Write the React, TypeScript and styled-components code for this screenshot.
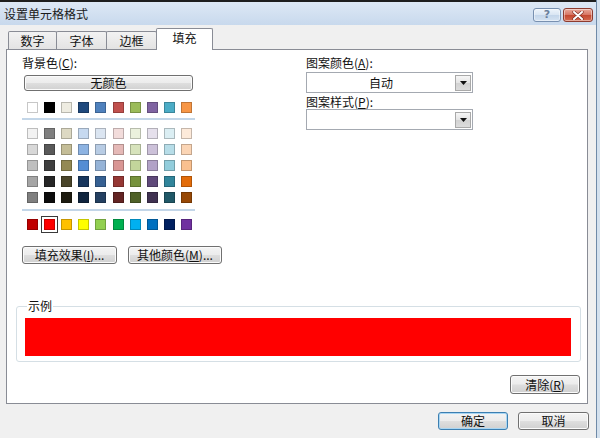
import React from "react";
import styled, { createGlobalStyle } from "styled-components";

const Global = createGlobalStyle`
  html, body { margin: 0; padding: 0; width: 600px; height: 438px; overflow: hidden; background: #d4e1ee; }
  body { font-family: "Noto Sans CJK SC", "Noto Sans", sans-serif; font-size: 12px; color: #111; }
  #root { width: 600px; height: 438px; }
  u { text-decoration-thickness: 1px; text-underline-offset: 1px; }
`;

const Window = styled.div`
  width: 597px;
  height: 438px;
  box-sizing: border-box;
  background: #f0f0f0;
  border-right: 1px solid #6f8aa8;
  display: flex;
  flex-direction: column;
`;

const TopEdge = styled.div`
  height: 2px;
  flex: none;
  background: #1e1e1e;
`;

const TitleBar = styled.div`
  height: 23px;
  flex: none;
  display: flex;
  align-items: flex-start;
  justify-content: space-between;
  padding: 0 3px 0 4px;
  background: linear-gradient(#dde8f5, #c8d9ed);
`;

const Title = styled.div`
  line-height: 14px;
  margin-top: 5px;
  font-size: 12px;
  color: #1a1a1a;
`;

const TitleButtons = styled.div`
  display: flex;
  gap: 2px;
  margin-top: 6px;
`;

const CaptionButton = styled.div<{ $close?: boolean }>`
  width: ${(p) => (p.$close ? 30 : 28)}px;
  height: 14px;
  box-sizing: border-box;
  border-radius: 3px;
  border: 1px solid ${(p) => (p.$close ? "#8d3b2f" : "#7890b0")};
  background: ${(p) =>
    p.$close
      ? "linear-gradient(#e9a99b, #d77462 50%, #c4472f 51%, #d46a4f)"
      : "linear-gradient(#eef4fb, #d9e5f3 50%, #c3d5ea 51%, #d5e3f2)"};
  box-shadow: inset 0 0 0 1px rgba(255, 255, 255, 0.45);
  display: flex;
  align-items: center;
  justify-content: center;
  font-size: 11px;
  font-weight: bold;
  line-height: 12px;
  color: #6a7f9c;
  font-family: "DejaVu Sans", sans-serif;
`;

const Body = styled.div`
  flex: 1;
  display: flex;
  flex-direction: column;
`;

const TabRow = styled.div`
  margin-top: 3px;
  height: 21px;
  flex: none;
  display: flex;
  align-items: flex-end;
  padding-left: 8px;
`;

const Tab = styled.div<{ $active?: boolean; $w: number }>`
  width: ${(p) => p.$w}px;
  height: ${(p) => (p.$active ? 22 : 18)}px;
  margin-bottom: ${(p) => (p.$active ? -1 : 0)}px;
  margin-left: -1px;
  &:first-child { margin-left: 0; }
  box-sizing: border-box;
  border: 1px solid #898c95;
  border-bottom: none;
  border-radius: 2px 2px 0 0;
  background: ${(p) => (p.$active ? "#ffffff" : "linear-gradient(#f2f2f2, #e3e3e3)")};
  position: relative;
  z-index: ${(p) => (p.$active ? 2 : 0)};
  display: flex;
  align-items: ${(p) => (p.$active ? "flex-start" : "center")};
  padding-top: ${(p) => (p.$active ? 2 : 0)}px;
  justify-content: center;
  font-size: 12px;
  line-height: 14px;
  color: #111;
`;

const Panel = styled.div`
  margin-left: 6px;
  width: 582px;
  height: 355px;
  flex: none;
  box-sizing: border-box;
  border: 1px solid #898c95;
  background: #ffffff;
  display: flex;
  flex-direction: column;
  position: relative;
  z-index: 1;
`;

const PanelTop = styled.div`
  display: flex;
  gap: 111px;
  padding: 6px 0 0 15px;
`;

const Column = styled.div<{ $w: number }>`
  width: ${(p) => p.$w}px;
  display: flex;
  flex-direction: column;
`;

const Label = styled.div<{ $mt?: number; $ml?: number }>`
  height: 14px;
  line-height: 14px;
  margin-top: ${(p) => p.$mt ?? 0}px;
  margin-left: ${(p) => p.$ml ?? 0}px;
  font-size: 12px;
  white-space: nowrap;
`;

const WinButton = styled.div<{ $w?: number; $h?: number; $default?: boolean }>`
  width: ${(p) => (p.$w ? `${p.$w}px` : "auto")};
  height: ${(p) => p.$h ?? 18}px;
  box-sizing: border-box;
  border: 1px solid ${(p) => (p.$default ? "#3c7fb1" : "#707070")};
  border-radius: 3px;
  background: linear-gradient(#f4f4f4 0%, #ececec 48%, #dedede 52%, #d0d0d0 100%);
  box-shadow: inset 0 0 0 1px ${(p) => (p.$default ? "#a9d6f3" : "#fbfbfb")};
  display: flex;
  align-items: center;
  justify-content: center;
  font-size: 12px;
  line-height: 14px;
  white-space: nowrap;
  color: #111;
  flex: none;
`;

const NoColor = styled(WinButton)`
  margin: 5px 2px 0;
`;

const SwatchRow = styled.div<{ $mt?: number }>`
  display: flex;
  justify-content: space-between;
  padding: 0 3px 0 5px;
  margin-top: ${(p) => p.$mt ?? 0}px;
`;

const SwatchGrid = styled.div<{ $mt?: number }>`
  display: flex;
  flex-direction: column;
  gap: 5px;
  margin-top: ${(p) => p.$mt ?? 0}px;
`;

const Swatch = styled.div<{ $c: string; $sel?: boolean }>`
  width: 11px;
  height: 11px;
  box-sizing: border-box;
  background: ${(p) => p.$c};
  box-shadow: inset 0 0 0 1px rgba(0, 0, 0, 0.22);
  outline: ${(p) => (p.$sel ? "1px solid #3a3a3a" : "none")};
  outline-offset: 2px;
`;

const Separator = styled.div<{ $mt: number }>`
  height: 2px;
  margin-top: ${(p) => p.$mt}px;
  background: #c3d6e8;
`;

const ButtonRow = styled.div`
  display: flex;
  gap: 11px;
  margin-top: 16px;
`;

const Combo = styled.div<{ $mt: number }>`
  margin-top: ${(p) => p.$mt}px;
  height: 21px;
  box-sizing: border-box;
  border: 1px solid #a4a9b1;
  background: #ffffff;
  display: flex;
  align-items: center;
  padding-right: 1px;
`;

const ComboText = styled.div`
  flex: 1;
  text-align: center;
  font-size: 12px;
  line-height: 14px;
`;

const ComboArrow = styled.div`
  width: 16px;
  height: 16px;
  box-sizing: border-box;
  border: 1px solid #a9a9a9;
  background: linear-gradient(#f6f6f6, #e4e4e4 50%, #d2d2d2 51%, #dcdcdc);
  display: flex;
  align-items: center;
  justify-content: center;
`;

const Sample = styled.fieldset`
  margin: 35px 0 0 9px;
  width: 565px;
  box-sizing: border-box;
  border: 1px solid #d5dfe5;
  border-radius: 3px;
  padding: 5px 8px 5px 8px;
  min-width: 0;
`;

const Legend = styled.legend`
  margin-left: 2px;
  padding: 0 1px;
  font-size: 12px;
  line-height: 14px;
  color: #111;
`;

const SampleFill = styled.div<{ $c: string }>`
  height: 38px;
  width: 546px;
  background: ${(p) => p.$c};
`;

const ClearRow = styled.div`
  display: flex;
  justify-content: flex-end;
  padding-right: 7px;
  margin-top: 13px;
`;

const Footer = styled.div`
  display: flex;
  justify-content: flex-end;
  gap: 10px;
  padding-right: 7px;
  margin-top: 8px;
`;

const themeRow = ["#FFFFFF", "#000000", "#EEECE1", "#1F497D", "#4F81BD", "#C0504D", "#9BBB59", "#8064A2", "#4BACC6", "#F79646"];
const tints = [
  ["#F2F2F2", "#7F7F7F", "#DDD9C3", "#C6D9F0", "#DBE5F1", "#F2DCDB", "#EBF1DD", "#E5E0EC", "#DBEEF3", "#FDEADA"],
  ["#D8D8D8", "#595959", "#C4BD97", "#8DB3E2", "#B8CCE4", "#E5B9B7", "#D7E3BC", "#CCC1D9", "#B7DDE8", "#FBD5B5"],
  ["#BFBFBF", "#3F3F3F", "#938953", "#548DD4", "#95B3D7", "#D99694", "#C3D69B", "#B2A2C7", "#92CDDC", "#FAC08F"],
  ["#A5A5A5", "#262626", "#494429", "#17365D", "#366092", "#953734", "#76923C", "#5F497A", "#31859B", "#E36C09"],
  ["#7F7F7F", "#0C0C0C", "#1D1B10", "#0F243E", "#244061", "#632423", "#4F6128", "#3F3151", "#205867", "#974806"],
];
const standard = ["#C00000", "#FF0000", "#FFC000", "#FFFF00", "#92D050", "#00B050", "#00B0F0", "#0070C0", "#002060", "#7030A0"];

const Arrow = () => (
  <svg width="7" height="4" viewBox="0 0 7 4">
    <path d="M0 0 H7 L3.5 4 Z" fill="#111" />
  </svg>
);

const CloseGlyph = () => (
  <svg width="12" height="9" viewBox="0 0 12 9">
    <path d="M2 1 L10 8 M10 1 L2 8" stroke="#7a2a1f" strokeWidth="3.2" strokeLinecap="round" />
    <path d="M2 1 L10 8 M10 1 L2 8" stroke="#ffffff" strokeWidth="2" strokeLinecap="round" />
  </svg>
);

export default function App() {
  const selected = "#FF0000";
  return (
    <>
      <Global />
      <Window>
        <TopEdge />
        <TitleBar>
          <Title>设置单元格格式</Title>
          <TitleButtons>
            <CaptionButton>?</CaptionButton>
            <CaptionButton $close>
              <CloseGlyph />
            </CaptionButton>
          </TitleButtons>
        </TitleBar>
        <Body>
          <TabRow>
            <Tab $w={49}>数字</Tab>
            <Tab $w={51}>字体</Tab>
            <Tab $w={51}>边框</Tab>
            <Tab $w={57} $active>填充</Tab>
          </TabRow>
          <Panel>
            <PanelTop>
              <Column $w={173}>
                <Label>
                  背景色(<u>C</u>):
                </Label>
                <NoColor $h={16}>无颜色</NoColor>
                <SwatchRow $mt={11}>
                  {themeRow.map((c) => (
                    <Swatch key={c} $c={c} />
                  ))}
                </SwatchRow>
                <Separator $mt={5} />
                <SwatchGrid $mt={8}>
                  {tints.map((row, i) => (
                    <SwatchRow key={i}>
                      {row.map((c, j) => (
                        <Swatch key={j} $c={c} />
                      ))}
                    </SwatchRow>
                  ))}
                </SwatchGrid>
                <Separator $mt={6} />
                <SwatchRow $mt={8}>
                  {standard.map((c) => (
                    <Swatch key={c} $c={c} $sel={c === selected} />
                  ))}
                </SwatchRow>
                <ButtonRow>
                  <WinButton $w={95}>
                    填充效果(<u>I</u>)...
                  </WinButton>
                  <WinButton $w={94}>
                    其他颜色(<u>M</u>)...
                  </WinButton>
                </ButtonRow>
              </Column>
              <Column $w={167}>
                <Label>
                  图案颜色(<u>A</u>):
                </Label>
                <Combo $mt={2}>
                  <ComboText>自动</ComboText>
                  <ComboArrow>
                    <Arrow />
                  </ComboArrow>
                </Combo>
                <Label $mt={2}>
                  图案样式(<u>P</u>):
                </Label>
                <Combo $mt={0}>
                  <ComboText />
                  <ComboArrow>
                    <Arrow />
                  </ComboArrow>
                </Combo>
              </Column>
            </PanelTop>
            <Sample>
              <Legend>示例</Legend>
              <SampleFill $c={selected} />
            </Sample>
            <ClearRow>
              <WinButton $w={70} $h={19}>
                清除(<u>R</u>)
              </WinButton>
            </ClearRow>
          </Panel>
          <Footer>
            <WinButton $w={70} $default>
              确定
            </WinButton>
            <WinButton $w={71}>取消</WinButton>
          </Footer>
        </Body>
      </Window>
    </>
  );
}
